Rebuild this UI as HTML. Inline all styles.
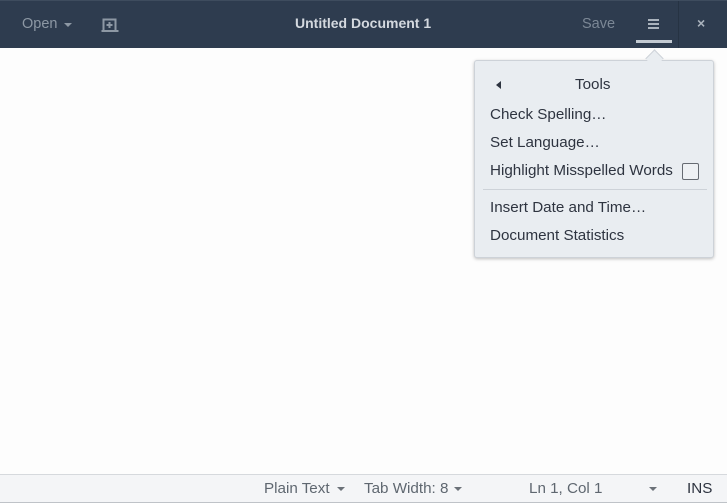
<!DOCTYPE html>
<html><head><style>
*{margin:0;padding:0;box-sizing:border-box}
body{width:727px;height:503px;background:#fdfdfd;font-family:"Liberation Sans",sans-serif;position:relative;overflow:hidden}
.hdr{position:absolute;left:0;top:0;width:727px;height:48px;background:#2e3c4f;border-top:1px solid #3e4c5e}
.t{position:absolute;font-size:14px;white-space:nowrap}
.tri{position:absolute;width:0;height:0;border-left:4px solid transparent;border-right:4px solid transparent;border-top:4px solid #8d98a4}
.pop{position:absolute;left:474px;top:60px;width:240px;height:198px;background:#e9edf1;border:1px solid #cdd2d8;border-radius:3px;box-shadow:0 1px 3px rgba(0,0,0,.25)}
.pop .t{color:#2e3440;font-size:15.2px;left:15px}
.sb{position:absolute;left:0;top:474px;width:727px;height:29px;background:#f4f5f7;border-top:1px solid #d6d9dd;border-bottom:1px solid #bfc3c8}
.sb .t{color:#5f6770;top:5px;font-size:15.2px}
.sb .tri{border-top-color:#6b7178;top:12px}
</style></head><body>
<div class="hdr">
 <div class="t" style="left:22px;top:15px;color:#8d98a4;font-size:14.5px">Open</div>
 <div class="tri" style="left:64px;top:22px"></div>
 <svg style="position:absolute;left:101px;top:16px" width="18" height="16" viewBox="0 0 18 16"><path d="M2.5 14.5V2.5H14.5V14.5" fill="none" stroke="#8d98a4" stroke-width="2"/><rect x="0.5" y="13" width="17" height="2" fill="#8d98a4"/><path d="M8.5 5v6M5.5 8h6" stroke="#8d98a4" stroke-width="2"/></svg>
 <div class="t" style="left:295px;top:14px;color:#d4d9df;font-weight:bold">Untitled Document 1</div>
 <div class="t" style="left:582px;top:15px;color:#7c8896;font-size:14.5px">Save</div>
 <div style="position:absolute;left:648px;top:18px;width:11px;height:2px;background:#aab3bd;box-shadow:0 4px 0 #aab3bd,0 8px 0 #aab3bd"></div>
 <div style="position:absolute;left:636px;top:39px;width:36px;height:3px;background:#c3cad2"></div>
 <div style="position:absolute;left:678px;top:0;width:1px;height:47px;background:#263343"></div>
 <div class="t" style="left:697px;top:14px;color:#aab3bd;font-weight:bold">×</div>
</div>
<div style="position:absolute;left:648px;top:52px;width:13px;height:13px;background:#e9edf1;border-left:1px solid #cdd2d8;border-top:1px solid #cdd2d8;transform:rotate(45deg);z-index:2"></div>
<div class="pop">
 <div style="position:absolute;left:21px;top:20px;width:0;height:0;border-top:4px solid transparent;border-bottom:4px solid transparent;border-right:5px solid #2e3440"></div>
 <div class="t" style="left:100px;top:15px">Tools</div>
 <div class="t" style="top:45px">Check Spelling…</div>
 <div class="t" style="top:73px">Set Language…</div>
 <div class="t" style="top:101px">Highlight Misspelled Words</div>
 <div style="position:absolute;left:207px;top:102px;width:17px;height:17px;border:1.5px solid #666b72;border-radius:2px;background:#eef1f4"></div>
 <div style="position:absolute;left:8px;top:128px;width:224px;height:1px;background:#cdd2d8"></div>
 <div class="t" style="top:138px">Insert Date and Time…</div>
 <div class="t" style="top:166px">Document Statistics</div>
</div>
<div class="sb">
 <div class="t" style="left:264px">Plain Text</div><div class="tri" style="left:337px"></div>
 <div class="t" style="left:364px">Tab Width: 8</div><div class="tri" style="left:454px"></div>
 <div class="t" style="left:529px">Ln 1, Col 1</div><div class="tri" style="left:649px"></div>
 <div class="t" style="left:687px;color:#2e3440">INS</div>
</div>
</body></html>
